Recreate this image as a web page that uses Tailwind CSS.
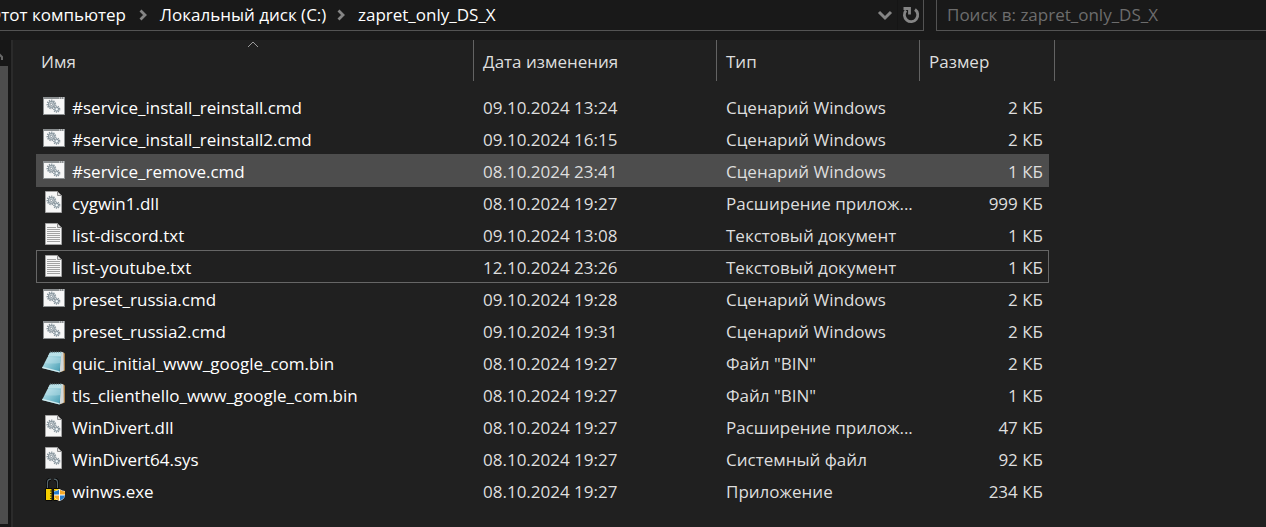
<!DOCTYPE html>
<html lang="ru">
<head>
<meta charset="utf-8">
<title>zapret_only_DS_X</title>
<script src="https://cdn.jsdelivr.net/npm/@tailwindcss/browser@4"></script>
</head>
<body class="flex h-screen flex-col overflow-hidden bg-[#191919] font-['Open_Sans','Noto_Sans',sans-serif] text-[17px] leading-6 text-white">

<svg class="absolute h-0 w-0" aria-hidden="true">
  <defs>
    <linearGradient id="pad" x1="0" y1="0" x2="1" y2="1">
      <stop offset="0" stop-color="#d5eef2"/><stop offset=".5" stop-color="#8cc8d6"/><stop offset="1" stop-color="#3c97ae"/>
    </linearGradient>
    <symbol id="gears" viewBox="0 0 14 13">
      <circle cx="5" cy="5" r="3.7" fill="none" stroke="#8a979f" stroke-width="1.6" stroke-dasharray="1.2 .9"/>
      <circle cx="5" cy="5" r="2.7" fill="#d3dade" stroke="#8a979f"/>
      <circle cx="5" cy="5" r="1.1" fill="#f7f7f7" stroke="#73818a" stroke-width=".7"/>
      <circle cx="10" cy="9.5" r="2.7" fill="none" stroke="#8a979f" stroke-width="1.4" stroke-dasharray="1.1 .8"/>
      <circle cx="10" cy="9.5" r="1.8" fill="#d3e0e6" stroke="#7f8d96" stroke-width=".9"/>
      <circle cx="10" cy="9.5" r=".7" fill="#fff"/>
    </symbol>
    <symbol id="cmd" viewBox="0 0 24 24">
      <rect x="1.5" y="3.5" width="21" height="17" fill="#f7f7f7" stroke="#8b8f91"/>
      <rect x="1" y="3" width="22" height="2" fill="#8b8f91"/>
      <path d="M17 4h1M19 4h1M21 4h1" stroke="#e8e8e8"/>
      <use href="#gears" x="4" y="5" width="15" height="14"/>
    </symbol>
    <symbol id="page" viewBox="0 0 24 24">
      <path d="M3.5 1.5h12l4 4v17h-16z" fill="#f6f6f6" stroke="#a3a3a3"/>
      <path d="M15.5 1.5v4h4z" fill="#dcdcdc" stroke="#8c8c8c"/>
    </symbol>
    <symbol id="dll" viewBox="0 0 24 24">
      <use href="#page"/>
      <use href="#gears" x="4" y="5" width="15" height="14"/>
    </symbol>
    <symbol id="txt" viewBox="0 0 24 24">
      <use href="#page"/>
      <path d="M5 5.5h9M5 7.5h13M5 9.5h13M5 11.5h13M5 13.5h13M5 15.5h13M5 17.5h13M5 19.5h13" stroke="#a2a2a2"/>
    </symbol>
    <symbol id="bin" viewBox="0 0 24 24">
      <path d="M20 2l3 1.500v17l-4 1.500z" fill="#a77c43"/>
      <path d="M18.500 1.500l3 1 .3 18-4.300 2z" fill="#d3d8d8"/>
      <path d="M8 2.500l11.500-.5L17.500 22.500 0 18z" fill="url(#pad)"/>
      <path d="M8 2.500l11.500-.5-.5 4.500L6 6z" fill="#b9e1e8"/>
      <path d="M5.500 7l13.500.5L18.300 13Q9 14 2.500 13z" fill="#c6e7ed" opacity=".4"/>
      <path d="M0 18l17.500 4.500.2-1.200L.7 16.800z" fill="#d2ebef"/>
      <path d="M8 2h11.500" stroke="#5d7075" stroke-dasharray="1 1"/>
    </symbol>
    <symbol id="exe" viewBox="0 0 24 24">
      <path d="M5.500 11V4.500Q5.500 1.200 9 1.200M12 1.200Q15.500 1.200 15.500 4.500V11" fill="none" stroke="#090909" stroke-width="3"/>
      <path d="M5.500 11V4.500Q5.500 1.200 9 1.200M12 1.200Q15.500 1.200 15.500 4.500V11" fill="none" stroke="#56656b" stroke-width="1.200"/>
      <path d="M3.500 10.500h6.500v12H3.500zM11.500 10.500h6v12h-6z" fill="#f4cd00" stroke="#080808"/>
      <path d="M8 13h2M8 15.500h2M8 18h2M8 20.500h2M11.500 13h2" stroke="#4d4000"/>
      <path d="M17.500 11q2.500 2 5.500 2v4q0 4-5.500 6-5.500-2-5.500-6v-4q3 0 5.500-2z" fill="#fff"/>
      <path d="M17 11.800V16.500H12v-3q2.800-.2 5-1.700zM18 17.500H23q-.6 3-5 5z" fill="#277ccd"/>
      <path d="M18 11.800V16.500H23v-3q-2.800-.2-5-1.700zM17 17.500H12q.6 3 5 5z" fill="#f6a929"/>
    </symbol>
    <symbol id="chevron" viewBox="0 0 8 12">
      <path d="M1.500 1.500L6 6l-4.500 4.500" fill="none" stroke="#858585" stroke-width="2.800"/>
    </symbol>
  </defs>
</svg>

<header class="flex h-[31px] shrink-0 gap-3">
  <div class="flex w-[924px] items-center border-r border-b border-[#535353]">
    <nav class="-ml-[10px] flex flex-1 items-center whitespace-nowrap" aria-label="Путь">
      <a href="#" class="w-[136px] text-right">Этот компьютер</a>
      <svg class="mx-[13px] h-3 w-2"><use href="#chevron"/></svg>
      <a href="#" class="w-[164px]">Локальный диск (C:)</a>
      <svg class="mx-[13px] h-3 w-2"><use href="#chevron"/></svg>
      <a href="#">zapret_only_DS_X</a>
    </nav>
    <button class="flex h-full w-6 items-center justify-center" aria-label="Предыдущие расположения">
      <svg class="h-3 w-4" viewBox="0 0 16 12" fill="none" stroke="#858585" stroke-width="3"><path d="M2 3l6 6 6-6"/></svg>
    </button>
    <button class="flex h-full w-[26px] items-center justify-center border-l border-[#151515]" aria-label="Обновить">
      <svg class="h-[18px] w-[18px]" viewBox="0 0 18 18" fill="none" stroke="#858585" stroke-width="2.800"><path d="M13 3.500A6.700 6.700 0 1 1 4 4.500"/><path d="M1.500 2.500h6v6"/></svg>
    </button>
  </div>
  <input type="search" aria-label="Поиск" placeholder="Поиск в: zapret_only_DS_X" class="min-w-0 flex-1 border-b border-l border-[#535353] bg-transparent pl-[10px] outline-none placeholder:text-[#6d6d6d]">
</header>

<div class="mt-[9px] flex min-h-0 flex-1">
  <aside class="flex w-[11px] shrink-0 flex-col bg-[#171717] pb-[3px]" aria-label="Прокрутка">
    <svg class="h-[26px] w-2 shrink-0" viewBox="0 0 8 26" fill="none" stroke="#686868" stroke-width="2"><path d="M-4 19l4-4 2 2v3"/></svg>
    <div class="w-2 flex-1 bg-[#4d4d4d]"></div>
  </aside>
  <main class="min-w-0 flex-1 border-l-2 border-[#2b2b2b] bg-[#202020] pl-[23px]">
    <table class="w-[1019px] table-fixed border-separate border-spacing-0 whitespace-nowrap text-[#dedede]">
      <colgroup><col class="w-[438px]"><col class="w-[243px]"><col class="w-[203px]"><col class="w-[129px]"><col class="w-[6px]"></colgroup>
      <thead>
        <tr class="h-[41px] text-left">
          <th class="relative border-r border-[#636363] p-0 pt-[2px] pl-[5px] font-normal">Имя
            <svg class="absolute top-0 left-1/2 h-2 w-3 -translate-x-2" viewBox="0 0 12 8" fill="none" stroke="#9b9b9b"><path d="M1 7l5-5 5 5"/></svg>
          </th>
          <th class="border-r border-[#636363] p-0 pt-[2px] pl-[9px] font-normal">Дата изменения</th>
          <th class="border-r border-[#636363] p-0 pt-[2px] pl-[9px] font-normal">Тип</th>
          <th colspan="2" class="border-r border-[#636363] p-0 pt-[2px] pl-[9px] font-normal">Размер</th>
        </tr>
        <tr class="h-[9px]"><td colspan="5" class="p-0"></td></tr>
      </thead>
      <tbody id="files"></tbody>
    </table>
  </main>
</div>

<script>
const files = [
  ['cmd', '#service_install_reinstall.cmd', '09.10.2024 13:24', 'Сценарий Windows', '2 КБ'],
  ['cmd', '#service_install_reinstall2.cmd', '09.10.2024 16:15', 'Сценарий Windows', '2 КБ'],
  ['cmd', '#service_remove.cmd', '08.10.2024 23:41', 'Сценарий Windows', '1 КБ', 'hover'],
  ['dll', 'cygwin1.dll', '08.10.2024 19:27', 'Расширение прилож...', '999 КБ'],
  ['txt', 'list-discord.txt', '09.10.2024 13:08', 'Текстовый документ', '1 КБ'],
  ['txt', 'list-youtube.txt', '12.10.2024 23:26', 'Текстовый документ', '1 КБ', 'focus'],
  ['cmd', 'preset_russia.cmd', '09.10.2024 19:28', 'Сценарий Windows', '2 КБ'],
  ['cmd', 'preset_russia2.cmd', '09.10.2024 19:31', 'Сценарий Windows', '2 КБ'],
  ['bin', 'quic_initial_www_google_com.bin', '08.10.2024 19:27', 'Файл "BIN"', '2 КБ'],
  ['bin', 'tls_clienthello_www_google_com.bin', '08.10.2024 19:27', 'Файл "BIN"', '1 КБ'],
  ['dll', 'WinDivert.dll', '08.10.2024 19:27', 'Расширение прилож...', '47 КБ'],
  ['dll', 'WinDivert64.sys', '08.10.2024 19:27', 'Системный файл', '92 КБ'],
  ['exe', 'winws.exe', '08.10.2024 19:27', 'Приложение', '234 КБ'],
];
const plain = ['', '', ''];
const looks = {
  hover: ['bg-[#4d4d4d] shadow-[0_1px_0_#4d4d4d]', 'bg-[#4d4d4d] shadow-[0_1px_0_#4d4d4d]', 'bg-[#4d4d4d] shadow-[0_1px_0_#4d4d4d]'],
  focus: [
    'shadow-[inset_1px_1px_0_#666,0_1px_0_#666]',
    'shadow-[inset_0_1px_0_#666,0_1px_0_#666]',
    'shadow-[inset_-1px_1px_0_#666,0_1px_0_#666]',
  ],
};
document.getElementById('files').innerHTML = files.map(([icon, name, date, type, size, state]) => {
  const [first, middle, last] = looks[state] || plain;
  return `<tr class="h-8">
    <td class="p-0 pl-[6px] text-white ${first}"><div class="flex items-center gap-[6px]"><svg class="h-6 w-6 shrink-0"><use href="#${icon}"/></svg><a href="#" class="pt-[3px]">${name}</a></div></td>
    <td class="p-0 pt-[3px] pl-[9px] ${middle}">${date}</td>
    <td class="p-0 pt-[3px] pl-[9px] ${middle}">${type}</td>
    <td class="p-0 pt-[3px] pr-[6px] text-right ${last}">${size}</td>
    <td class="p-0"></td>
  </tr>`;
}).join('');
</script>
</body>
</html>
